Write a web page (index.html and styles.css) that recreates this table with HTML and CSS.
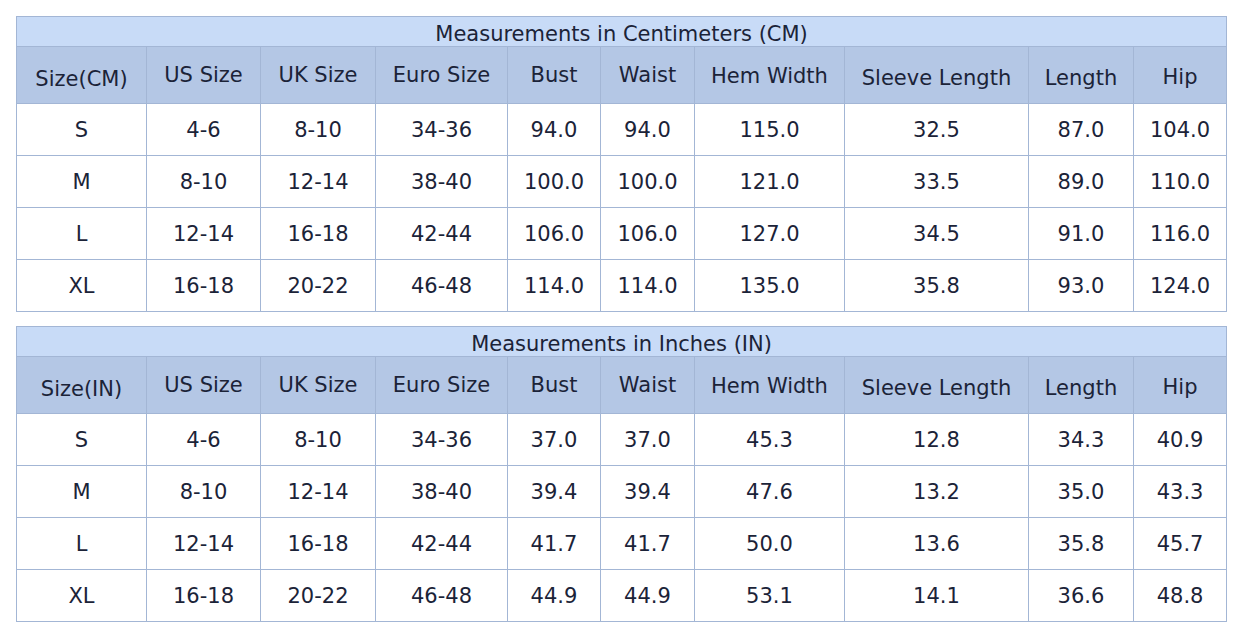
FILE: index.html
```html
<!DOCTYPE html>
<html lang="en">
<head>
<meta charset="utf-8">
<title>Size Chart</title>
<link rel="stylesheet" href="styles.css">
</head>
<body>
<table class="chart">
  <colgroup>
    <col class="c1"><col class="c2"><col class="c3"><col class="c4"><col class="c5">
    <col class="c6"><col class="c7"><col class="c8"><col class="c9"><col class="c10">
  </colgroup>
  <tr class="title-row"><td colspan="10" class="title">Measurements in Centimeters (CM)</td></tr>
  <tr class="head-row">
    <th class="d4">Size(CM)</th><th>US Size</th><th>UK Size</th><th>Euro Size</th><th>Bust</th>
    <th>Waist</th><th class="d1">Hem Width</th><th class="d3">Sleeve Length</th><th class="d3b">Length</th><th class="d2">Hip</th>
  </tr>
  <tr><td>S</td><td>4-6</td><td>8-10</td><td>34-36</td><td>94.0</td><td>94.0</td><td>115.0</td><td>32.5</td><td>87.0</td><td>104.0</td></tr>
  <tr><td>M</td><td>8-10</td><td>12-14</td><td>38-40</td><td>100.0</td><td>100.0</td><td>121.0</td><td>33.5</td><td>89.0</td><td>110.0</td></tr>
  <tr><td>L</td><td>12-14</td><td>16-18</td><td>42-44</td><td>106.0</td><td>106.0</td><td>127.0</td><td>34.5</td><td>91.0</td><td>116.0</td></tr>
  <tr><td>XL</td><td>16-18</td><td>20-22</td><td>46-48</td><td>114.0</td><td>114.0</td><td>135.0</td><td>35.8</td><td>93.0</td><td>124.0</td></tr>
</table>
<table class="chart second">
  <colgroup>
    <col class="c1"><col class="c2"><col class="c3"><col class="c4"><col class="c5">
    <col class="c6"><col class="c7"><col class="c8"><col class="c9"><col class="c10">
  </colgroup>
  <tr class="title-row"><td colspan="10" class="title">Measurements in Inches (IN)</td></tr>
  <tr class="head-row">
    <th class="d4">Size(IN)</th><th>US Size</th><th>UK Size</th><th>Euro Size</th><th>Bust</th>
    <th>Waist</th><th class="d1">Hem Width</th><th class="d3">Sleeve Length</th><th class="d3b">Length</th><th class="d2">Hip</th>
  </tr>
  <tr><td>S</td><td>4-6</td><td>8-10</td><td>34-36</td><td>37.0</td><td>37.0</td><td>45.3</td><td>12.8</td><td>34.3</td><td>40.9</td></tr>
  <tr><td>M</td><td>8-10</td><td>12-14</td><td>38-40</td><td>39.4</td><td>39.4</td><td>47.6</td><td>13.2</td><td>35.0</td><td>43.3</td></tr>
  <tr><td>L</td><td>12-14</td><td>16-18</td><td>42-44</td><td>41.7</td><td>41.7</td><td>50.0</td><td>13.6</td><td>35.8</td><td>45.7</td></tr>
  <tr><td>XL</td><td>16-18</td><td>20-22</td><td>46-48</td><td>44.9</td><td>44.9</td><td>53.1</td><td>14.1</td><td>36.6</td><td>48.8</td></tr>
</table>
</body>
</html>
```

FILE: styles.css
```css
html, body {
  margin: 0;
  padding: 0;
  background: #ffffff;
}

body {
  padding: 16px 0 0 16px;
  font-family: "DejaVu Sans", Verdana, sans-serif;
  color: #1b2338;
}

.chart {
  border-collapse: collapse;
  table-layout: fixed;
  width: 1211px;
  font-size: 21px;
}

.chart.second {
  margin-top: 14px;
}

.c1 { width: 130px; }
.c2 { width: 114px; }
.c3 { width: 115px; }
.c4 { width: 132px; }
.c5 { width: 93px; }
.c6 { width: 94px; }
.c7 { width: 150px; }
.c8 { width: 184px; }
.c9 { width: 105px; }
.c10 { width: 93px; }

.chart td,
.chart th {
  border: 1px solid #a3b6d5;
  padding: 0;
  text-align: center;
  vertical-align: middle;
  font-weight: normal;
  white-space: nowrap;
  line-height: 24px;
}

.chart tr {
  height: 52px;
}

.chart tr.title-row {
  height: 30px;
}

.chart tr.head-row {
  height: 57px;
}

.chart .title {
  background: #c8dbf7;
  padding-top: 4px;
  line-height: 24px;
}

.chart th {
  background: #b4c7e5;
}

.chart th.d1 { padding-top: 2px; }
.chart th.d2 { padding-top: 3px; }
.chart th.d3 { padding-top: 5px; }
.chart th.d3b { padding-top: 6px; }
.chart th.d4 { padding-top: 7px; }
```
